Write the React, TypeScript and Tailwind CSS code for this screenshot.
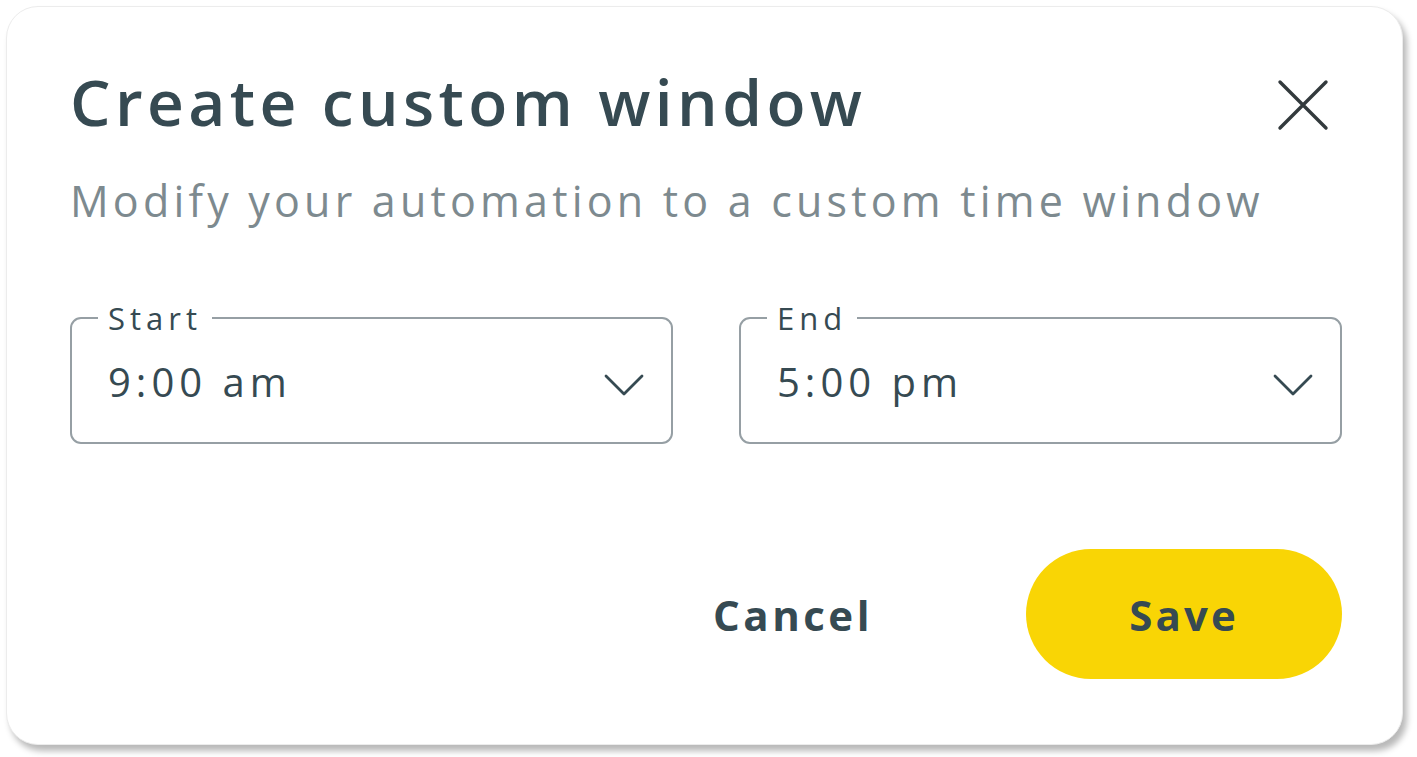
const font = { fontFamily: "'Open Sans', 'Liberation Sans', sans-serif" };

function Chevron() {
  return (
    <svg width="40" height="23" viewBox="0 0 40 23" fill="none" className="text-[#364a52] -mt-[5px]">
      <path d="M2 2 L20 20 L38 2" stroke="currentColor" strokeWidth="2.8" strokeLinecap="round" strokeLinejoin="round" />
    </svg>
  );
}

function TimeSelect({ label, value }: { label: string; value: string }) {
  return (
    <fieldset className="flex-1 h-[141px] border-2 border-[#969fa4] rounded-[11px] p-0 flex flex-col">
      <legend className="ml-[26px] px-[10px] text-[31px] leading-[30px] text-[#364a52] tracking-[5px]">
        {label}
      </legend>
      <div className="flex-1 flex items-center justify-between pl-[36px] pr-[27px]">
        <span className="text-[40px] text-[#364a52] -mt-[12px] tracking-[5px]">{value}</span>
        <Chevron />
      </div>
    </fieldset>
  );
}

export default function App() {
  return (
    <div className="w-[1417px] h-[757px] bg-white p-[6px] pr-[14px] pb-[12px]" style={font}>
      <div className="w-full h-full bg-white rounded-[32px] shadow-[4px_6px_6px_rgba(0,0,0,0.28)] border border-[#ececec] pl-[63px] pr-[60px] pt-[57px]">
        {/* Header */}
        <div className="flex items-start justify-between">
          <h2 className="text-[64px] leading-[76px] font-semibold text-[#364a52] tracking-[4.4px]">
            Create custom window
          </h2>
          <svg width="52" height="52" viewBox="0 0 52 52" className="text-[#333a3d] mt-[15px] mr-[13px]">
            <path d="M3 3 L49 49 M49 3 L3 49" stroke="currentColor" strokeWidth="3.4" strokeLinecap="round" />
          </svg>
        </div>
        <p className="mt-[35px] text-[43px] leading-[52px] text-[#7d8a8f] tracking-[4.2px]">
          Modify your automation to a custom time window
        </p>

        {/* Time window */}
        <div className="mt-[76px] flex gap-[66px]">
          <TimeSelect label="Start" value="9:00 am" />
          <TimeSelect label="End" value="5:00 pm" />
        </div>

        {/* Actions */}
        <div className="mt-[105px] flex items-center justify-end gap-[153px]">
          <button className="text-[42px] font-bold text-[#364a52] tracking-[3.5px]">Cancel</button>
          <button className="w-[316px] h-[130px] rounded-full bg-[#f9d505] text-[42px] font-bold text-[#364a52] tracking-[3.1px]">
            Save
          </button>
        </div>
      </div>
    </div>
  );
}
